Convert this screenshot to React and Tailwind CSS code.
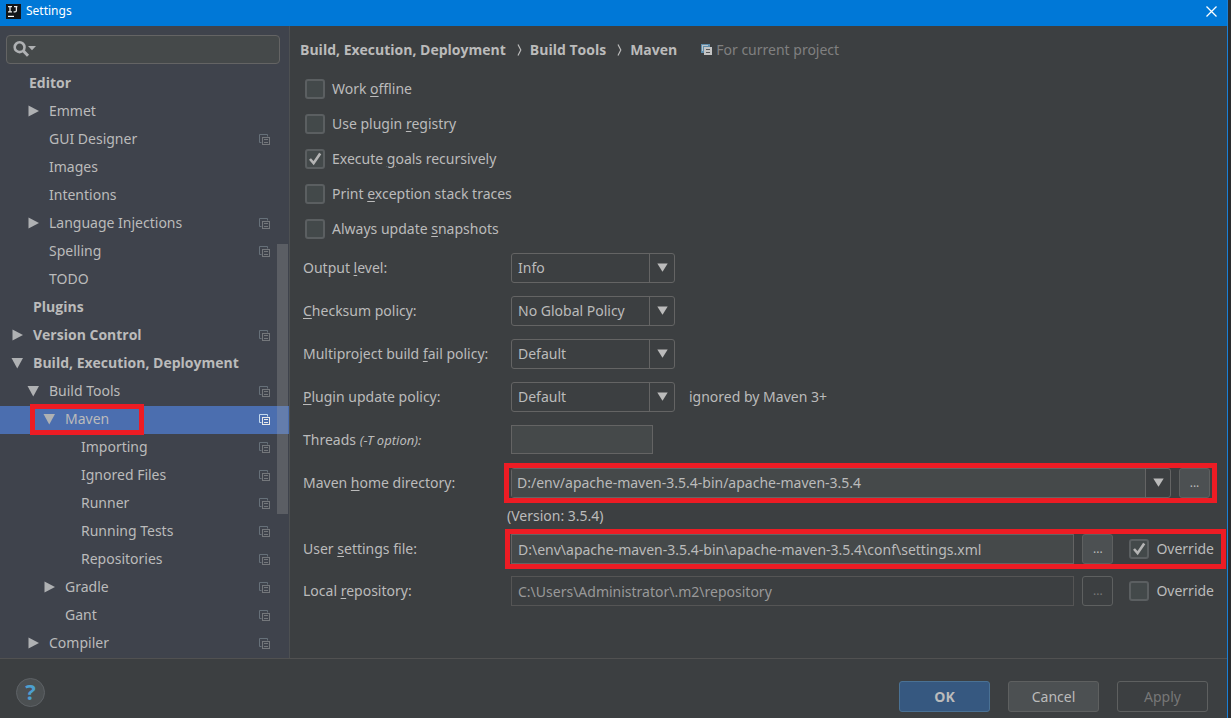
import React from 'react';

const tree = [
  { label: 'Editor', pad: 'pl-[29px]', bold: true },
  { label: 'Emmet', pad: 'pl-[27px]', arrow: 'right' },
  { label: 'GUI Designer', pad: 'pl-[27px]', arrow: 'none', copy: true },
  { label: 'Images', pad: 'pl-[27px]', arrow: 'none' },
  { label: 'Intentions', pad: 'pl-[27px]', arrow: 'none' },
  { label: 'Language Injections', pad: 'pl-[27px]', arrow: 'right', copy: true },
  { label: 'Spelling', pad: 'pl-[27px]', arrow: 'none', copy: true },
  { label: 'TODO', pad: 'pl-[27px]', arrow: 'none' },
  { label: 'Plugins', pad: 'pl-[11px]', arrow: 'none', bold: true },
  { label: 'Version Control', pad: 'pl-[11px]', arrow: 'right', bold: true, copy: true },
  { label: 'Build, Execution, Deployment', pad: 'pl-[11px]', arrow: 'down', bold: true },
  { label: 'Build Tools', pad: 'pl-[27px]', arrow: 'down', copy: true },
  { label: 'Maven', pad: 'pl-[43px]', arrow: 'down', copy: true, selected: true },
  { label: 'Importing', pad: 'pl-[59px]', arrow: 'none', copy: true },
  { label: 'Ignored Files', pad: 'pl-[59px]', arrow: 'none', copy: true },
  { label: 'Runner', pad: 'pl-[59px]', arrow: 'none', copy: true },
  { label: 'Running Tests', pad: 'pl-[59px]', arrow: 'none', copy: true },
  { label: 'Repositories', pad: 'pl-[59px]', arrow: 'none', copy: true },
  { label: 'Gradle', pad: 'pl-[43px]', arrow: 'right', copy: true },
  { label: 'Gant', pad: 'pl-[43px]', arrow: 'none', copy: true },
  { label: 'Compiler', pad: 'pl-[27px]', arrow: 'right', copy: true },
];

function TreeArrow({ kind }) {
  return (
    <svg className="h-3 w-[22px] shrink-0" viewBox="0 0 22 12" fill="#afb1b3" aria-hidden="true">
      {kind === 'right' && <path d="M1.5 0.5 L12 6 L1.5 11.5Z" />}
      {kind === 'down' && <path d="M0.5 1 H12 L6.25 11.5Z" />}
    </svg>
  );
}

function CopyIcon({ back, front, className = '' }) {
  return (
    <svg className={'h-[11px] w-[11px] shrink-0 ' + className} viewBox="0 0 11 11" fill="none" aria-hidden="true">
      <path d="M2.5 8.5 H0.5 V0.5 H8.5 V2.5" stroke={back} />
      <rect x="3.5" y="3.5" width="7" height="7" stroke={front} />
      <path d="M5 5.5 H9 M5 8.5 H9" stroke={front} />
    </svg>
  );
}

function ProjectIcon() {
  return (
    <svg className="mr-1 ml-6 h-[11px] w-[11px] shrink-0" viewBox="0 0 11 11" fill="none" aria-hidden="true">
      <path d="M0 0 H9 V3 H3 V9 H0Z" fill="#5f8dab" />
      <path d="M1 1.5 H7 M1.5 1 V7" stroke="#b9c3ca" />
      <rect x="3" y="3" width="8" height="8" fill="#c4c4c4" />
      <path d="M5 5.5 H9 M5 8.5 H9" stroke="#55585a" />
    </svg>
  );
}

function Crumb() {
  return (
    <svg className="h-3 w-6 shrink-0" viewBox="0 0 24 12" fill="none" stroke="#bbbbbb" strokeWidth="1.2" aria-hidden="true">
      <path d="M12 0.5 L14.8 6 L12 11.5" />
    </svg>
  );
}

function Caret() {
  return (
    <svg className="h-[9px] w-[11px]" viewBox="0 0 11 9" fill="#bbbbbb" aria-hidden="true">
      <path d="M0.3 0.5 H10.7 L5.5 8.8Z" />
    </svg>
  );
}

function Check({ id, checked, children }) {
  return (
    <div className="flex items-center">
      <span className="relative flex">
        <input
          id={id}
          type="checkbox"
          defaultChecked={checked}
          className="peer h-5 w-5 appearance-none rounded-[3px] border-2 border-[#5b5f61] bg-[#43494a]"
        />
        <svg
          className="pointer-events-none absolute inset-0 hidden h-5 w-5 peer-checked:block"
          viewBox="0 0 20 20"
          fill="none"
          stroke="#b4b4b4"
          strokeWidth="2.6"
          aria-hidden="true"
        >
          <path d="M5 10 L8.6 14.2 L15.2 4.4" />
        </svg>
      </span>
      <label htmlFor={id} className="pl-[7px] whitespace-nowrap">{children}</label>
    </div>
  );
}

function Key({ children }) {
  return <span className="underline underline-offset-2">{children}</span>;
}

function Combo({ id, value, options }) {
  return (
    <div className="relative flex">
      <select
        id={id}
        defaultValue={value}
        className="h-[30px] w-[164px] appearance-none rounded-[3px] border border-[#646464] bg-[#3c3f41] pt-px pl-[6px]"
      >
        {options.map((o) => <option key={o}>{o}</option>)}
      </select>
      <span className="pointer-events-none absolute inset-y-px right-px flex w-[25px] items-center justify-center border-l border-[#646464]">
        <Caret />
      </span>
    </div>
  );
}

function Row({ id, label, height = 'h-[43px]', children }) {
  return (
    <div className={'flex items-center ' + height}>
      <label htmlFor={id} className="w-[208px] shrink-0 whitespace-nowrap">{label}</label>
      {children}
    </div>
  );
}

function Browse({ disabled, label }) {
  return (
    <button
      type="button"
      aria-label={label}
      disabled={disabled}
      className="ml-2 h-[30px] w-[31px] shrink-0 rounded-[3px] border border-[#5e6060] bg-[#4c5052] text-[12px] disabled:bg-transparent disabled:text-[#777777]"
    >
      ...
    </button>
  );
}

const checks = [
  ['offline', false, <>Work <Key>o</Key>ffline</>],
  ['registry', false, <>Use plugin <Key>r</Key>egistry</>],
  ['recursive', true, <>Execute <Key>g</Key>oals recursively</>],
  ['traces', false, <>Print <Key>e</Key>xception stack traces</>],
  ['snapshots', false, <>Always update <Key>s</Key>napshots</>],
];

export default function App() {
  return (
    <div className="flex min-h-screen bg-[#2b2d2f] font-['Noto_Sans','Open_Sans',sans-serif] text-[14px] leading-5 text-[#bbbbbb]">
      <div className="flex min-w-0 flex-1 flex-col border-r border-[#1a80d8] bg-[#3c3f41]">
        <header className="flex h-[26px] items-center bg-[#0078d7] pr-2 pb-1 pl-[6px] text-[12px] text-white">
          <svg className="h-[15px] w-[15px]" viewBox="0 0 15 15" fill="none" aria-hidden="true">
            <rect width="15" height="15" fill="#121417" />
            <path d="M2 2.6 H6 M4 2.6 V8 M2 7.9 H6 M8 2.6 H11.4 M10.4 2.6 V6.6 Q10.4 7.9 9 7.9 H7.6" stroke="#e8e8e8" strokeWidth="1.3" />
            <path d="M2 12.4 H8" stroke="#ffffff" strokeWidth="1.2" />
          </svg>
          <h1 className="flex-1 pl-[5px]">Settings</h1>
          <button type="button" aria-label="Close" className="flex h-4 w-4 items-center justify-center">
            <svg className="h-[11px] w-[11px]" viewBox="0 0 11 11" stroke="#ffffff" strokeWidth="1.3" aria-hidden="true">
              <path d="M0.5 0.5 L10.5 10.5 M10.5 0.5 L0.5 10.5" />
            </svg>
          </button>
        </header>

        <div className="flex flex-1 border-b border-[#515151]">
          <nav className="w-[290px] shrink-0 border-r border-[#4d5052] bg-[#3f434c]">
            <div className="pt-[9px] pr-[9px] pb-[6px] pl-[6px]">
              <div className="flex h-[29px] items-center rounded-[4px] border border-[#646464] bg-[#45494a] pb-[2px] pl-[6px]">
                <svg className="h-4 w-6 shrink-0" viewBox="0 0 24 16" fill="none" aria-hidden="true">
                  <circle cx="6.6" cy="6.2" r="4.9" stroke="#afb1b3" strokeWidth="2.6" />
                  <path d="M10.2 9.8 L15 14.8" stroke="#afb1b3" strokeWidth="3" />
                  <path d="M15 5 H23 L19 9.2Z" fill="#afb1b3" />
                </svg>
                <input aria-label="Search settings" type="text" className="min-w-0 flex-1 bg-transparent px-1 outline-none" />
              </div>
            </div>
            <div className="relative">
              <ul>
                {tree.map((n) => (
                  <li key={n.label} className={n.selected ? 'bg-[#4b6eaf]' : ''}>
                    <a href="#" className={'flex h-7 items-center pr-[19px] pb-[2px] ' + n.pad}>
                      <span className={"relative flex flex-1 items-center whitespace-nowrap " + (n.bold ? "font-['Open_Sans',sans-serif] font-bold" : '')}>
                        {n.arrow && <TreeArrow kind={n.arrow} />}
                        {n.label}
                        {n.selected && (
                          <span className="pointer-events-none absolute -top-[5px] -left-[13px] h-[31px] w-[114px] border-5 border-[#ed1c24]" />
                        )}
                      </span>
                      {n.copy && (
                        <CopyIcon
                          back={n.selected ? '#c3d9ee' : '#667079'}
                          front={n.selected ? '#e8e8e8' : '#74777b'}
                          className="mt-px"
                        />
                      )}
                    </a>
                  </li>
                ))}
              </ul>
              <div className="pointer-events-none absolute top-[174px] right-px h-[270px] w-[11px] bg-[#a6a6a6]/28" />
            </div>
          </nav>

          <main className="min-w-0 flex-1">
            <div className="flex h-[47px] items-center pl-[10px] font-['Open_Sans',sans-serif] font-bold whitespace-nowrap">
              <span>Build, Execution, Deployment</span>
              <Crumb />
              <span>Build Tools</span>
              <Crumb />
              <span>Maven</span>
              <ProjectIcon />
              <span className="font-['Noto_Sans',sans-serif] font-normal text-[#808080]">For current project</span>
            </div>

            <div className="flex flex-col gap-[15px] pt-[6px] pl-[15px]">
              {checks.map(([id, on, text]) => <Check key={id} id={id} checked={on}>{text}</Check>)}
            </div>

            <div className="pt-[7px] pl-[13px]">
              <Row id="output" label={<>Output <Key>l</Key>evel:</>}>
                <Combo id="output" value="Info" options={['Debug', 'Info', 'Warn']} />
              </Row>
              <Row id="checksum" label={<><Key>C</Key>hecksum policy:</>}>
                <Combo id="checksum" value="No Global Policy" options={['No Global Policy', 'Fail', 'Warn']} />
              </Row>
              <Row id="fail" label={<>Multiproject build <Key>f</Key>ail policy:</>}>
                <Combo id="fail" value="Default" options={['Default', 'Fail Fast']} />
              </Row>
              <Row id="update" label={<><Key>P</Key>lugin update policy:</>}>
                <Combo id="update" value="Default" options={['Default', 'Update']} />
                <span className="pl-[14px]">ignored by Maven 3+</span>
              </Row>
              <Row id="threads" label={<>Threads <em className="text-[13px]">(-T option):</em></>}>
                <input id="threads" type="text" className="h-[29px] w-[142px] border border-[#646464] bg-[#45494a] px-[6px]" />
              </Row>
              <Row id="home" label={<>Maven <Key>h</Key>ome directory:</>}>
                <div className="relative mr-[17px] flex min-w-0 flex-1">
                  <div className="flex h-[30px] min-w-0 flex-1 rounded-[3px] border border-[#646464]">
                    <input
                      id="home"
                      type="text"
                      defaultValue="D:/env/apache-maven-3.5.4-bin/apache-maven-3.5.4"
                      className="min-w-0 flex-1 bg-[#45494a] px-[5px]"
                    />
                    <button type="button" aria-label="Show directories" className="flex w-[25px] items-center justify-center border-l border-[#646464]">
                      <Caret />
                    </button>
                  </div>
                  <Browse label="Browse Maven home directory" />
                  <span className="pointer-events-none absolute -inset-x-[7px] -inset-y-[5px] border-5 border-[#ed1c24]" />
                </div>
              </Row>
              <p className="py-[2px] pl-[204px]">(Version: 3.5.4)</p>
              <Row id="user" height="h-[42px]" label={<>User <Key>s</Key>ettings file:</>}>
                <div className="relative mr-[13px] flex min-w-0 flex-1 items-center">
                  <input
                    id="user"
                    type="text"
                    defaultValue="D:\env\apache-maven-3.5.4-bin\apache-maven-3.5.4\conf\settings.xml"
                    className="h-[30px] min-w-0 flex-1 border border-[#646464] bg-[#45494a] px-[6px]"
                  />
                  <Browse label="Browse user settings file" />
                  <div className="pl-4"><Check id="override-user" checked>Override</Check></div>
                  <span className="pointer-events-none absolute -inset-y-[5px] -right-3 -left-[6px] border-5 border-[#ed1c24]" />
                </div>
              </Row>
              <Row id="repo" height="h-[42px]" label={<>Local <Key>r</Key>epository:</>}>
                <div className="mr-[13px] flex min-w-0 flex-1 items-center">
                  <input
                    id="repo"
                    type="text"
                    disabled
                    defaultValue="C:\Users\Administrator\.m2\repository"
                    className="h-[30px] min-w-0 flex-1 border border-[#555555] px-[6px] text-[#999999]"
                  />
                  <Browse disabled label="Browse local repository" />
                  <div className="pl-4"><Check id="override-repo">Override</Check></div>
                </div>
              </Row>
            </div>
          </main>
        </div>

        <footer className="flex h-[59px] items-start pt-[19px] pr-[19px] pl-4">
          <button
            type="button"
            aria-label="Help"
            className="flex h-[29px] w-[29px] items-center justify-center rounded-full border border-[#5e6266] bg-[#4c5052] pb-[3px] font-['Open_Sans',sans-serif] text-[22px] font-bold text-[#4c9fcf]"
          >
            ?
          </button>
          <div className="ml-auto flex gap-[18px] pt-[3px]">
            <button type="button" className="h-[31px] w-[91px] rounded-[3px] border border-[#4a7194] bg-[#365880] font-['Open_Sans',sans-serif] font-bold">OK</button>
            <button type="button" className="h-[31px] w-[91px] rounded-[3px] border border-[#5e6060] bg-[#4c5052]">Cancel</button>
            <button type="button" disabled className="h-[31px] w-[91px] rounded-[3px] border border-[#5e6060] text-[#777777]">Apply</button>
          </div>
        </footer>
      </div>
      <div className="w-[3px] shrink-0" />
    </div>
  );
}
